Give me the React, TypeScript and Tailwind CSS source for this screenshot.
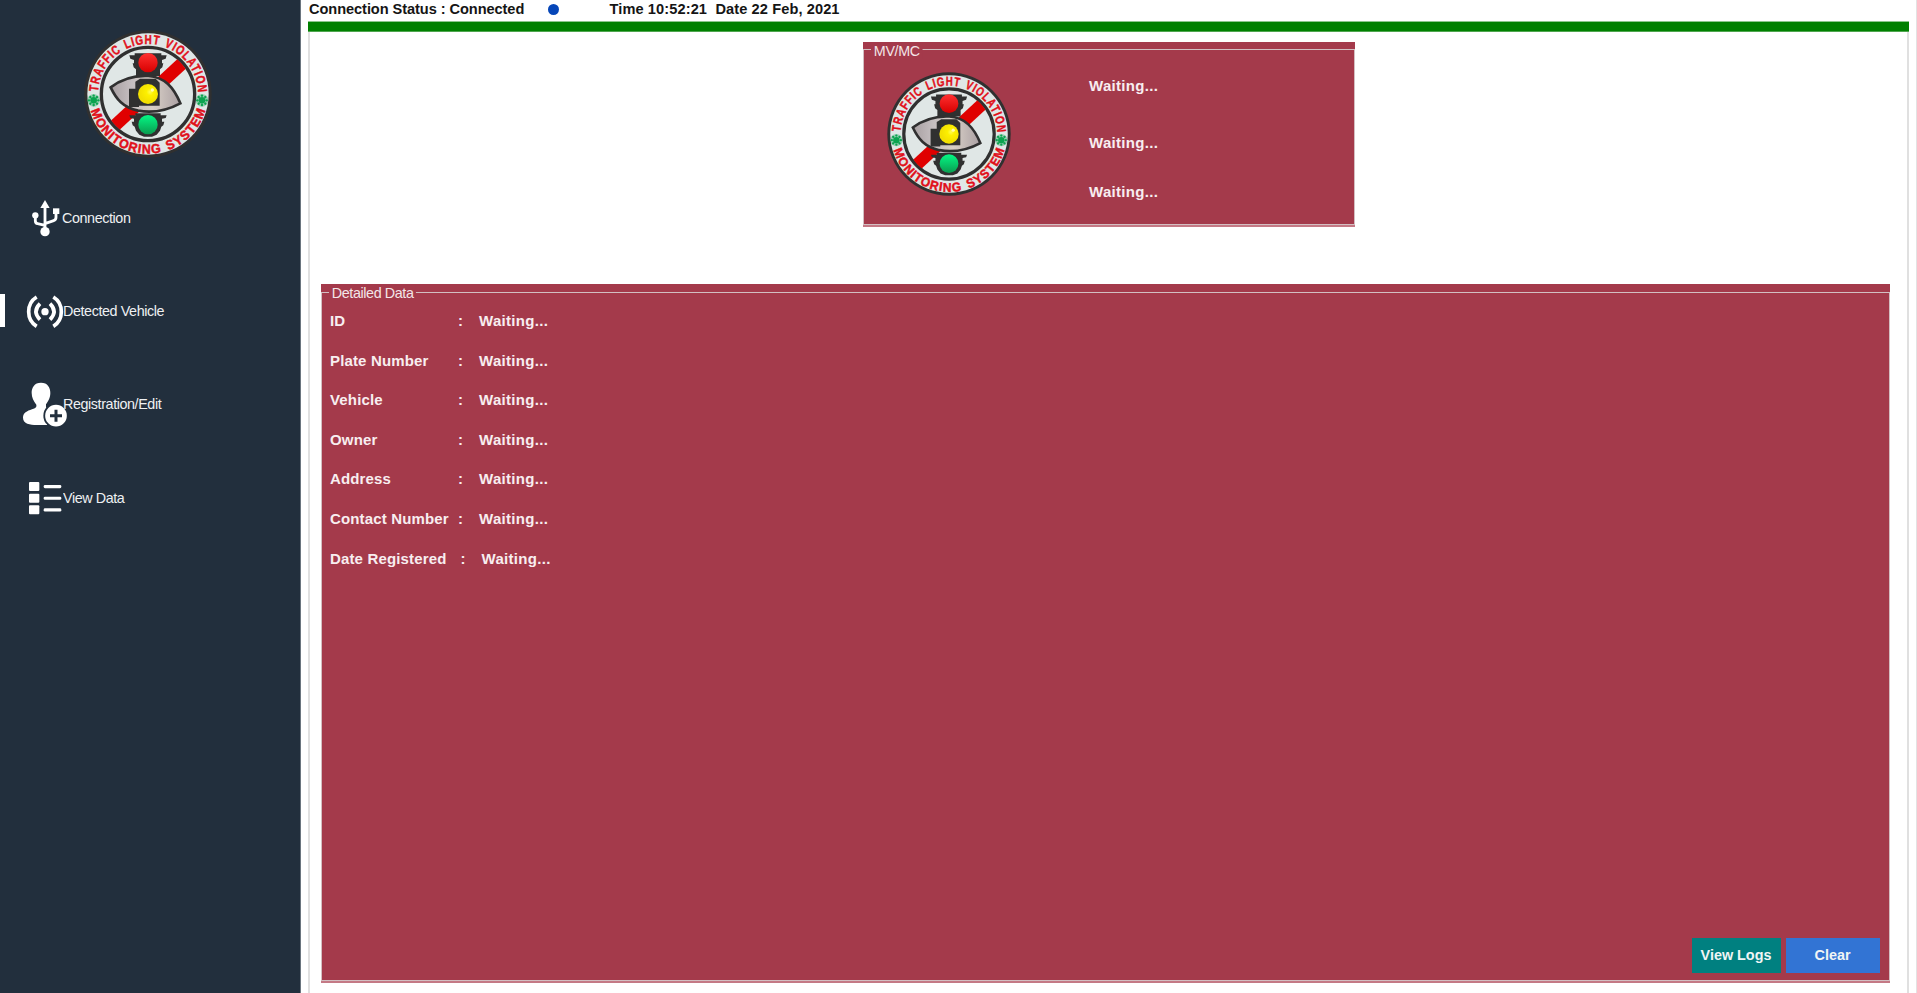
import React from "react";

const ARIAL = "font-['Liberation_Sans',Arial,sans-serif]";

function Flower({ x, y }: { x: number; y: number }) {
  return (
    <g transform={`translate(${x} ${y})`}>
      <circle r="19" fill="#0ba34f" opacity="0.35" />
      {[0, 45, 90, 135, 180, 225, 270, 315].map((a) => (
        <circle key={a} cx="0" cy="-14" r="3.6" fill="#0ba34f" transform={`rotate(${a})`} />
      ))}
      <circle r="10" fill="#0ba34f" />
    </g>
  );
}

function Signal({ y, id, cut }: { y: number; id: string; cut?: boolean }) {
  return (
    <g transform={`translate(235 ${y})`}>
      <path
        d={
          cut
            ? "M-56 -28H-38V-34H38V-28H56L53 -20L42 -18V-9H49L46 2L40 6L36 18L26 30L12 36H-12L-26 30L-36 18L-40 6L-46 2L-49 -9H-42V-18L-53 -20Z"
            : "M-56 -22H-40V-28H40V-22H56L53 -12L42 -8V2H46L43 14L36 20V40H-36V20L-43 14L-46 2H-42V-8L-53 -12Z"
        }
        fill="#303030"
      />
      <circle r="29" fill={`url(#${id})`} />
    </g>
  );
}

function Logo({ id, className }: { id: string; className: string }) {
  return (
    <svg viewBox="43 44 384 384" className={className}>
      <defs>
        <linearGradient id={`${id}-red`} x2="0" y2="1">
          <stop stopColor="#ff3030" />
          <stop offset="1" stopColor="#d80000" />
        </linearGradient>
        <linearGradient id={`${id}-green`} x2="0" y2="1">
          <stop stopColor="#04f884" />
          <stop offset="1" stopColor="#0a9c50" />
        </linearGradient>
        <radialGradient id={`${id}-yellow`} cx="0.6" cy="0.4">
          <stop stopColor="#fffb50" />
          <stop offset="0.35" stopColor="#fdf000" />
          <stop offset="1" stopColor="#f3e000" />
        </radialGradient>
        <linearGradient id={`${id}-eye`}>
          <stop stopColor="#a79fa1" />
          <stop offset="0.3" stopColor="#c5bec0" />
          <stop offset="0.6" stopColor="#d8cfc6" />
          <stop offset="1" stopColor="#aaa0a3" />
        </linearGradient>
        <path id={`${id}-top`} d="M85 236A150 150 0 0 1 385 236" />
        <path id={`${id}-bottom`} d="M56 236A179 179 0 0 0 414 236" />
        <clipPath id={`${id}-disc`}>
          <circle cx="235" cy="236" r="136" />
        </clipPath>
      </defs>
      <circle cx="235" cy="236" r="191" fill="#303030" />
      <circle cx="235" cy="236" r="182" fill="#e0e7e6" />
      <circle cx="235" cy="236" r="140" fill="#e0e7e6" stroke="#303030" strokeWidth="10" />
      <g clipPath={`url(#${id}-disc)`}>
        <path d="M120 345L355 128" stroke="#e00000" strokeWidth="38" />
      </g>
      <Signal y={142} id={`${id}-red`} />
      <Signal y={328} id={`${id}-green`} cut />
      <path
        d="M123 216C155 192 195 180 236 182C285 185 312 216 332 264C295 284 255 295 205 286C160 276 140 252 123 216Z"
        fill={`url(#${id}-eye)`}
        stroke="#303030"
        strokeWidth="8"
      />
      <path d="M178 220H197V199L211 190H258L270 202V271H208V275H178Z" fill="#303030" />
      <circle cx="235" cy="236" r="30" fill={`url(#${id}-yellow)`} />
      <circle cx="248" cy="224" r="5" fill="#fff9b0" />
      <g
        fill="#e0101a"
        stroke="#e0101a"
        strokeWidth="1.4"
        fontFamily="'Liberation Sans Narrow','Liberation Sans',sans-serif"
        fontWeight="bold"
        fontSize="39"
        letterSpacing="3.5"
        wordSpacing="5"
      >
        <text>
          <textPath href={`#${id}-top`} startOffset="7" textLength="462" lengthAdjust="spacingAndGlyphs">
            TRAFFIC LIGHT VIOLATION
          </textPath>
        </text>
        <text>
          <textPath href={`#${id}-bottom`} startOffset="50" textLength="466" lengthAdjust="spacingAndGlyphs">
            MONITORING SYSTEM
          </textPath>
        </text>
      </g>
      <Flower x={72} y={255} />
      <Flower x={397} y={255} />
    </svg>
  );
}

function UsbIcon() {
  return (
    <svg viewBox="0 -26 201 280" className="h-[93.33px] w-[67px] shrink-0" fill="#fff">
      <path d="M135 61L149 85H121Z" />
      <circle cx="135" cy="156" r="14" />
      <circle cx="106" cy="107" r="9.5" />
      <path d="M159 86H178V103H159Z" />
      <path
        d="M135 80V150M106 108V123Q106 131 113 132L135 137M168 100V113Q168 121 161 123L137 131"
        fill="none"
        stroke="#fff"
        strokeWidth="8.5"
      />
    </svg>
  );
}

function SensorIcon() {
  return (
    <svg viewBox="0 254 201 280" className="h-[93.33px] w-[67px] shrink-0">
      <circle cx="135" cy="397" r="11" fill="#fff" />
      <g fill="none" stroke="#fff" strokeWidth="11">
        <path d="M120 373Q96 397 120 421M150 373Q174 397 150 421" />
        <path d="M110 353C78 373 78 421 110 441M160 353C192 373 192 421 160 441" />
      </g>
    </svg>
  );
}

function AddUserIcon() {
  return (
    <svg viewBox="0 -21 201 280" className="h-[93.33px] w-[67px] shrink-0" fill="#fff">
      <path d="M123 53C143 53 151 68 151 84C151 99 144 109 138 118Q136 128 142 134V180H110C90 180 69 176 69 158C69 144 81 138 96 133Q112 128 109 119C101 109 95 98 95 84C95 68 103 53 123 53Z" />
      <circle cx="168" cy="152" r="38" fill="#222f3d" />
      <circle cx="168" cy="152" r="32.5" />
      <path d="M168 134V170M150 152H186" stroke="#222f3d" strokeWidth="9" />
    </svg>
  );
}

function ListIcon() {
  return (
    <svg viewBox="0 259 201 280" className="h-[93.33px] w-[67px] shrink-0" fill="#fff">
      {[352, 387, 422].map((y) => (
        <g key={y}>
          <rect x="87" y={y} width="31" height="27" rx="3" />
          <rect x="131" y={y + 9} width="53" height="9.5" rx="4" />
        </g>
      ))}
    </svg>
  );
}

const NAV = [
  { label: "Connection", icon: <UsbIcon />, offset: "-ml-[5px]" },
  { label: "Detected Vehicle", icon: <SensorIcon />, active: true, offset: "-ml-[4px]" },
  { label: "Registration/Edit", icon: <AddUserIcon />, offset: "-ml-[4px]" },
  { label: "View Data", icon: <ListIcon />, offset: "-ml-[4px]" },
];

const ROWS = ["ID", "Plate Number", "Vehicle", "Owner", "Address", "Contact Number", "Date Registered"];

function GroupBox({ title, className, children }: { title: string; className: string; children: React.ReactNode }) {
  return (
    <section className={`relative flex flex-col border-b-2 border-b-[#c47985] bg-[#a43a4b] pt-[7.5px] ${className}`}>
      <span className="absolute left-[8px] top-[1px] origin-left scale-x-[0.955] bg-[#a43a4b] px-[3px] text-[15px] leading-[16px] tracking-[-0.42px] text-[#f3e6e8]">
        {title}
      </span>
      <div className="flex min-h-0 flex-1 border border-[#d3bfc2]">{children}</div>
    </section>
  );
}

export default function App() {
  return (
    <div className={`flex h-[993px] w-[1917px] overflow-hidden bg-white ${ARIAL}`}>
      <aside className="flex w-[301px] shrink-0 flex-col border-r border-[#6a747e] bg-[#222f3d]">
        <div className="h-[171px] pl-[84px] pt-[29.5px]">
          <Logo id="side" className="h-[128px] w-[128px]" />
        </div>
        <nav>
          {NAV.map((n) => (
            <a key={n.label} className="relative flex h-[93.33px] items-center">
              {n.active && <span className="absolute left-0 top-[29.5px] h-[33px] w-[5px] bg-white" />}
              {n.icon}
              <span
                className={`relative origin-left scale-x-[0.955] whitespace-nowrap text-[15px] leading-5 tracking-[-0.42px] text-[#eef0f2] ${n.offset}`}
              >
                {n.label}
              </span>
            </a>
          ))}
        </nav>
      </aside>

      <main className="flex flex-1 flex-col border-r border-[#e3e3e3] pl-[7px] pr-[7px]">
        <header className="flex h-[21px] shrink-0 items-center whitespace-pre pb-[2px] pl-[1px] text-[14.6px] font-bold text-[#151515]">
          <span className="w-[238.5px] tracking-[-0.07px]">Connection Status : Connected</span>
          <span className="h-[11px] w-[11px] rounded-full bg-[#0646b8]" />
          <span className="ml-[51px] tracking-[0.1px]">Time 10:52:21  Date 22 Feb, 2021</span>
        </header>
        <div className="h-[11px] shrink-0 border-b border-t border-b-[#4fa64f] border-t-[#8cc68c] bg-[#008000]" />
        <div className="flex min-h-0 flex-1 flex-col border-x-2 border-[#e0e0e0] pl-[11px] pr-[17.5px]">
          <div className="pl-[542px] pt-[9.5px]">
            <GroupBox title="MV/MC" className="h-[185.5px] w-[491.5px]">
              <div className="w-[225px] pl-[23px] pt-[21.5px]">
                <Logo id="card" className="h-[124px] w-[124px]" />
              </div>
              <div className="flex flex-col pt-[25.5px] text-[15px] font-bold leading-[20px] tracking-[0.3px] text-[#f8eef0]">
                <span>Waiting...</span>
                <span className="mt-[37.5px]">Waiting...</span>
                <span className="mt-[28.5px]">Waiting...</span>
              </div>
            </GroupBox>
          </div>
          <GroupBox title="Detailed Data" className="mb-[10px] mt-[57px] min-h-0 flex-1">
            <div className="flex flex-1 flex-col justify-between pb-[7px] pl-[8px] pr-[9px] pt-[9px]">
              <dl className="text-[15px] font-bold text-[#f8eef0]">
                {ROWS.map((label) => (
                  <div key={label} className="flex h-[39.6px] items-center whitespace-nowrap last:[&>dt]:w-[130.5px]">
                    <dt className="w-[128px] tracking-[0.15px]">{label}</dt>
                    <span className="w-[21px]">:</span>
                    <dd className="tracking-[0.3px]">Waiting...</dd>
                  </div>
                ))}
              </dl>
              <div className="flex justify-end gap-[5px] text-[14.4px] font-bold text-[#f0f5f5]">
                <button className="h-[35px] w-[89px] bg-[#008080]">View Logs</button>
                <button className="h-[35px] w-[94px] bg-[#3274d4]">Clear</button>
              </div>
            </div>
          </GroupBox>
        </div>
      </main>
    </div>
  );
}
